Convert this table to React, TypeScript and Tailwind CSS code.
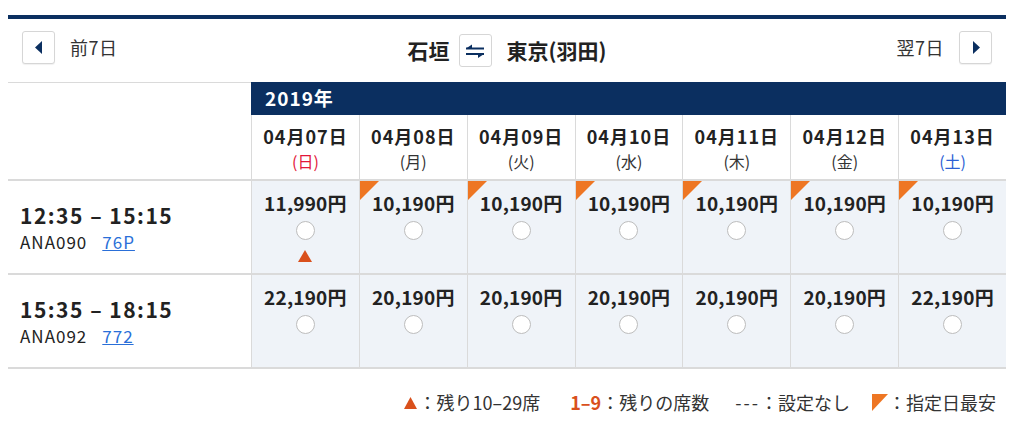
import React from 'react';

const NAVY = 'bg-[#0b2f60]';

const DAYS = [
    { date: '04月07日', wd: '日', color: 'text-[#e3163a]' },
    { date: '04月08日', wd: '月', color: 'text-[#333]' },
    { date: '04月09日', wd: '火', color: 'text-[#333]' },
    { date: '04月10日', wd: '水', color: 'text-[#333]' },
    { date: '04月11日', wd: '木', color: 'text-[#333]' },
    { date: '04月12日', wd: '金', color: 'text-[#333]' },
    { date: '04月13日', wd: '土', color: 'text-[#2c5fd4]' },
];

interface Fare {
    price: string;
    cheapest?: boolean;
    few?: boolean;
}

interface Flight {
    time: string;
    code: string;
    plane: string;
    fares: Fare[];
}

const FLIGHTS: Flight[] = [
    {
        time: '12:35 – 15:15',
        code: 'ANA090',
        plane: '76P',
        fares: [
            { price: '11,990円', few: true },
            { price: '10,190円', cheapest: true },
            { price: '10,190円', cheapest: true },
            { price: '10,190円', cheapest: true },
            { price: '10,190円', cheapest: true },
            { price: '10,190円', cheapest: true },
            { price: '10,190円', cheapest: true },
        ],
    },
    {
        time: '15:35 – 18:15',
        code: 'ANA092',
        plane: '772',
        fares: [
            { price: '22,190円' },
            { price: '20,190円' },
            { price: '20,190円' },
            { price: '20,190円' },
            { price: '20,190円' },
            { price: '20,190円' },
            { price: '22,190円' },
        ],
    },
];

function Corner({ className }: { className?: string }) {
    return (
        <svg width="19" height="19" viewBox="0 0 19 19" className={className}>
            <path d="M0 0H19L0 19Z" fill="#ee7623" />
        </svg>
    );
}

function NavButton({ dir }: { dir: 'left' | 'right' }) {
    return (
        <button className="w-[33px] h-[33px] flex items-center justify-center border border-[#d6d6d6] rounded-[3px] bg-white shadow-[0_1px_1px_rgba(0,0,0,0.06)]">
            <svg width="8" height="13" viewBox="0 0 8 13">
                {dir === 'left' ? <path d="M7 0V13L0 6.5Z" fill="#0b2f60" /> : <path d="M1 0V13L8 6.5Z" fill="#0b2f60" />}
            </svg>
        </button>
    );
}

function FareCell({ fare }: { fare: Fare }) {
    return (
        <div className="relative border-l border-b-2 border-[#dadada] bg-[#eff3f8] h-[94px] flex flex-col items-center">
            {fare.cheapest && <Corner className="absolute left-0 top-0" />}
            <div className="mt-[9px] text-[19px] font-bold leading-[26px] tracking-[0.2px] text-[#222]">{fare.price}</div>
            <div className="mt-[5px] w-[19px] h-[19px] rounded-full border border-[#bdbdbd] bg-white" />
            {fare.few && (
                <svg width="14" height="12" viewBox="0 0 14 12" className="mt-[10px]">
                    <path d="M7 0L14 12H0Z" fill="#d9501c" />
                </svg>
            )}
        </div>
    );
}

export default function App() {
    return (
        <div className="w-[1024px] h-[432px] bg-white text-[#333] font-['Noto_Sans_CJK_JP',sans-serif]">
            <div className="ml-2 w-[998px] pt-[15px]">
                <div className="border-t-4 border-[#0b2f60] h-[67px] grid grid-cols-[1fr_auto_1fr] px-[14px]">
                    <div className="flex items-center gap-[15px] self-start mt-[12px]">
                        <NavButton dir="left" />
                        <span className="text-[18px] tracking-[0.5px]">前7日</span>
                    </div>
                    <div className="flex items-center self-start mt-[15px] font-bold text-[21px] text-[#222]">
                        <span>石垣</span>
                        <button className="ml-[9px] w-[33px] h-[33px] flex items-center justify-center border border-[#d6d6d6] rounded-[3px] bg-white">
                            <svg width="20" height="14" viewBox="0 0 20 14">
                                <path d="M1 4.5H19" stroke="#0b2f60" strokeWidth="2" />
                                <path d="M1 4.5L7 0.5V4.5Z" fill="#0b2f60" />
                                <path d="M1 10H19" stroke="#0b2f60" strokeWidth="2" />
                                <path d="M19 10L13 14V10Z" fill="#0b2f60" />
                            </svg>
                        </button>
                        <span className="ml-[15px]">東京(羽田)</span>
                    </div>
                    <div className="flex items-center justify-end gap-[15px] self-start mt-[12px]">
                        <span className="text-[18px] tracking-[0.5px]">翌7日</span>
                        <NavButton dir="right" />
                    </div>
                </div>

                <div className="grid grid-cols-[243px_repeat(7,minmax(0,1fr))]">
                    <div className="row-span-2 border-t border-b-2 border-[#dadada]" />
                    <div className={`col-span-7 h-[33px] ${NAVY} flex items-center pl-[14px] text-white font-bold text-[19px] tracking-[1px]`}>
                        2019年
                    </div>
                    {DAYS.map((d) => (
                        <div key={d.date} className="border-l border-b-2 border-[#dadada] h-[66px] flex flex-col items-center pt-[8px]">
                            <div className="text-[18px] font-bold leading-[26px] tracking-[1px] text-[#222]">{d.date}</div>
                            <div className={`text-[16px] leading-[24px] ${d.color}`}>({d.wd})</div>
                        </div>
                    ))}

                    {FLIGHTS.map((f) => (
                        <React.Fragment key={f.code}>
                            <div className="border-b-2 border-[#dadada] h-[94px] flex flex-col pl-[12px] pt-[20px]">
                                <div className="text-[21px] font-bold leading-[28px] tracking-[1.5px] text-[#222]">{f.time}</div>
                                <div className="mt-[1px] text-[17px] leading-[24px] tracking-[1px] text-[#222]">
                                    {f.code}
                                    <a href="#" className="ml-[15px] text-[#2a6fd8] underline">{f.plane}</a>
                                </div>
                            </div>
                            {f.fares.map((fare, i) => (
                                <FareCell key={i} fare={fare} />
                            ))}
                        </React.Fragment>
                    ))}
                </div>

                <div className="mt-[20px] flex items-center justify-end pr-[10px] text-[18px] text-[#333]">
                    <svg width="13" height="12" viewBox="0 0 13 12">
                        <path d="M6.5 0L13 12H0Z" fill="#d9501c" />
                    </svg>
                    <span className="ml-[2px]">：残り10–29席</span>
                    <span className="ml-[30px] font-bold text-[#d9501c]">1–9</span>
                    <span>：残りの席数</span>
                    <span className="ml-[26px] tracking-[2px]">---</span>
                    <span>：設定なし</span>
                    <svg width="16" height="17" viewBox="0 0 16 17" className="ml-[22px]">
                        <path d="M0 0H16L0 17Z" fill="#ee7623" />
                    </svg>
                    <span>：指定日最安</span>
                </div>
            </div>
        </div>
    );
}
